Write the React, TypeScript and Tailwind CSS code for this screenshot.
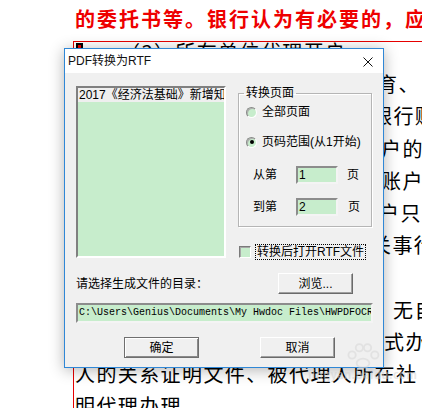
import React from 'react';

// the document lines peeking out round the dialog: [left offset, visible text]
const docLines: [number, string][] = [
  [303, '育、'],
  [298, '银行账'],
  [307, '户的'],
  [307, '账户'],
  [305, '户只'],
  [297, '关事行'],
  [0, ''],
  [319, '无自'],
  [310, '式办'],
  [1, '人的关系证明文件、被代理人所在社'],
  [1, '明代理办理'],
];

function Radio({ checked }: { checked?: boolean }) {
  return (
    <span className="flex h-[11px] w-[11px] items-center justify-center rounded-full border border-t-[#8a8a8a] border-l-[#8a8a8a] border-r-white border-b-white bg-[#c7edcc] shadow-[inset_1px_1px_0_#b0b0b0]">
      {checked && <span className="h-[4px] w-[4px] rounded-full bg-black" />}
    </span>
  );
}

function Field({ value, className }: { value: string; className?: string }) {
  return (
    <div
      className={`flex items-center border-2 border-t-[#8c8c8c] border-l-[#8c8c8c] border-r-[#f4f4f4] border-b-[#f4f4f4] bg-[#c7edcc] pl-[1px] leading-none text-black ${className ?? ''}`}
    >
      {value}
    </div>
  );
}

function Btn({ label, isDefault }: { label: string; isDefault?: boolean }) {
  return (
    <button
      className={`flex h-[21px] w-[75px] items-center justify-center text-[12px] leading-none text-black ${
        isDefault
          ? 'border border-[#6f6f6f] bg-[#f0f0f0] shadow-[inset_1px_1px_0_#fff,inset_-1px_-1px_0_#8a8a8a]'
          : 'border border-t-white border-l-white border-r-[#6a6a6a] border-b-[#6a6a6a] bg-[#f0f0f0] shadow-[inset_-1px_-1px_0_#a0a0a0]'
      }`}
    >
      {label}
    </button>
  );
}

function Dialog() {
  return (
    <div className="absolute left-[64px] top-[48px] flex h-[320px] w-[320px] flex-col border border-[#2f87d6] bg-[#f0f0f0] font-['Liberation_Sans','Noto_Sans_CJK_SC',sans-serif] shadow-[0_2px_14px_rgba(0,0,0,0.3)]">
      {/* title bar */}
      <div className="flex h-[24px] items-center justify-between bg-white pl-[3px] pr-[10px]">
        <span className="text-[12px] leading-none text-[#111]">PDF转换为RTF</span>
        <svg width="10" height="10" viewBox="0 0 10 10" className="mt-[1px]">
          <path d="M0.5 0.5 L9.5 9.5 M9.5 0.5 L0.5 9.5" stroke="#111" strokeWidth="1" />
        </svg>
      </div>

      <div className="flex flex-1 flex-col pl-[11px] pr-[10px] pt-[13px]">
        <div className="flex gap-[12px]">
          {/* file list */}
          <div className="h-[172px] w-[150px] overflow-hidden border-2 border-t-[#808080] border-l-[#808080] border-r-white border-b-white bg-[#c7edcc]">
            <div className="h-[14px] whitespace-nowrap bg-[#efefef] pl-[1px] text-[12px] leading-[14px] text-black">
              2017《经济法基础》新增知识点
            </div>
          </div>

          <div className="flex w-[134px] flex-col">
            <fieldset className="m-0 h-[141px] border border-[#b5b5b5] px-[5px] pb-0 shadow-[inset_1px_1px_0_#fff,1px_1px_0_#fff]">
              <legend className="px-[2px] text-[12px] leading-[14px] text-black">转换页面</legend>
              <div className="ml-[2px] mt-[5px] flex h-[14px] items-center gap-[5px] text-[12px] text-black">
                <Radio />
                <span>全部页面</span>
              </div>
              <div className="ml-[2px] mt-[16px] flex h-[14px] items-center gap-[5px] text-[12px] text-black">
                <Radio checked />
                <span>页码范围(从1开始)</span>
              </div>
              <div className="ml-[9px] mt-[17px] flex h-[18px] items-center text-[12px] text-black">
                <span className="w-[43px]">从第</span>
                <Field value="1" className="h-[18px] w-[42px] text-[12px]" />
                <span className="ml-[9px]">页</span>
              </div>
              <div className="ml-[9px] mt-[14px] flex h-[18px] items-center text-[12px] text-black">
                <span className="w-[43px]">到第</span>
                <Field value="2" className="h-[18px] w-[42px] text-[12px]" />
                <span className="ml-[10px]">页</span>
              </div>
            </fieldset>

            <div className="ml-[1px] mt-[17px] flex items-center gap-[4px]">
              <span className="h-[12px] w-[12px] border border-t-[#7a7a7a] border-l-[#7a7a7a] border-r-white border-b-white bg-[#c7edcc] shadow-[inset_1px_1px_0_#a8a8a8]" />
              <span className="border border-dotted border-black px-[1px] text-[12px] leading-[14px] text-black">
                转换后打开RTF文件
              </span>
            </div>
          </div>
        </div>

        <div className="mt-[13px] flex items-center">
          <span className="flex-1 text-[12px] leading-none text-black">请选择生成文件的目录：</span>
          <div className="mr-[20px]">
            <Btn label="浏览..." />
          </div>
        </div>

        <Field
          value="C:\Users\Genius\Documents\My Hwdoc Files\HWPDFOCR"
          className="mt-[9px] h-[20px] w-[297px] overflow-hidden whitespace-nowrap font-['Liberation_Mono',monospace] text-[10px]"
        />

        <div className="ml-[48px] mt-[14px] flex gap-[61px]">
          <Btn label="确定" isDefault />
          <Btn label="取消" />
        </div>
      </div>
    </div>
  );
}

export default function App() {
  return (
    <div className="relative h-[408px] w-[422px] overflow-hidden bg-white font-['Noto_Sans_CJK_SC',sans-serif]">
      <div className="pl-[73px] pt-[3px]">
        <div className="h-[32px] whitespace-nowrap pl-[2px] text-[20px] font-bold leading-[32px] tracking-[2px] text-[#ee0000]">
          的委托书等。银行认为有必要的，应当要求
        </div>

        <div className="mt-[6px] border-l border-t border-[#e60000]">
          <div className="-mt-[6px]">
            <div className="flex h-[32.2px] items-center whitespace-nowrap text-[20px] tracking-[1.4px] text-black">
              <span className="mb-auto ml-[2px] mt-[7px] flex h-[7px] w-[7px] items-center justify-center bg-black">
                <span className="h-[3px] w-[3px] bg-[#ee0000]" />
              </span>
              <span className="ml-[37px]">（3）所在单位代理开户</span>
            </div>
            {docLines.map(([pad, text], i) => (
              <div
                key={i}
                className="h-[32.2px] whitespace-nowrap text-[20px] leading-[32.2px] tracking-[1.4px] text-black"
                style={{ paddingLeft: pad }}
              >
                {text}
              </div>
            ))}
          </div>
        </div>
      </div>

      <Dialog />

      {/* baidu jingyan watermark */}
      <div className="pointer-events-none absolute left-[308px] top-[340px] flex flex-col items-center opacity-50">
        <svg width="40" height="30" viewBox="0 0 44 32">
          <g fill="none" stroke="#d6d6d6" strokeWidth="2">
            <circle cx="10" cy="16" r="4" />
            <circle cx="18" cy="8" r="4" />
            <circle cx="27" cy="8" r="4" />
            <circle cx="35" cy="16" r="4" />
            <ellipse cx="22" cy="25" rx="7" ry="5" />
          </g>
        </svg>
        <span className="-mt-[1px] text-[11px] font-bold leading-none tracking-[0.5px] text-[#d0d0d0]">
          jingyan.baidu.com
        </span>
      </div>
    </div>
  );
}
